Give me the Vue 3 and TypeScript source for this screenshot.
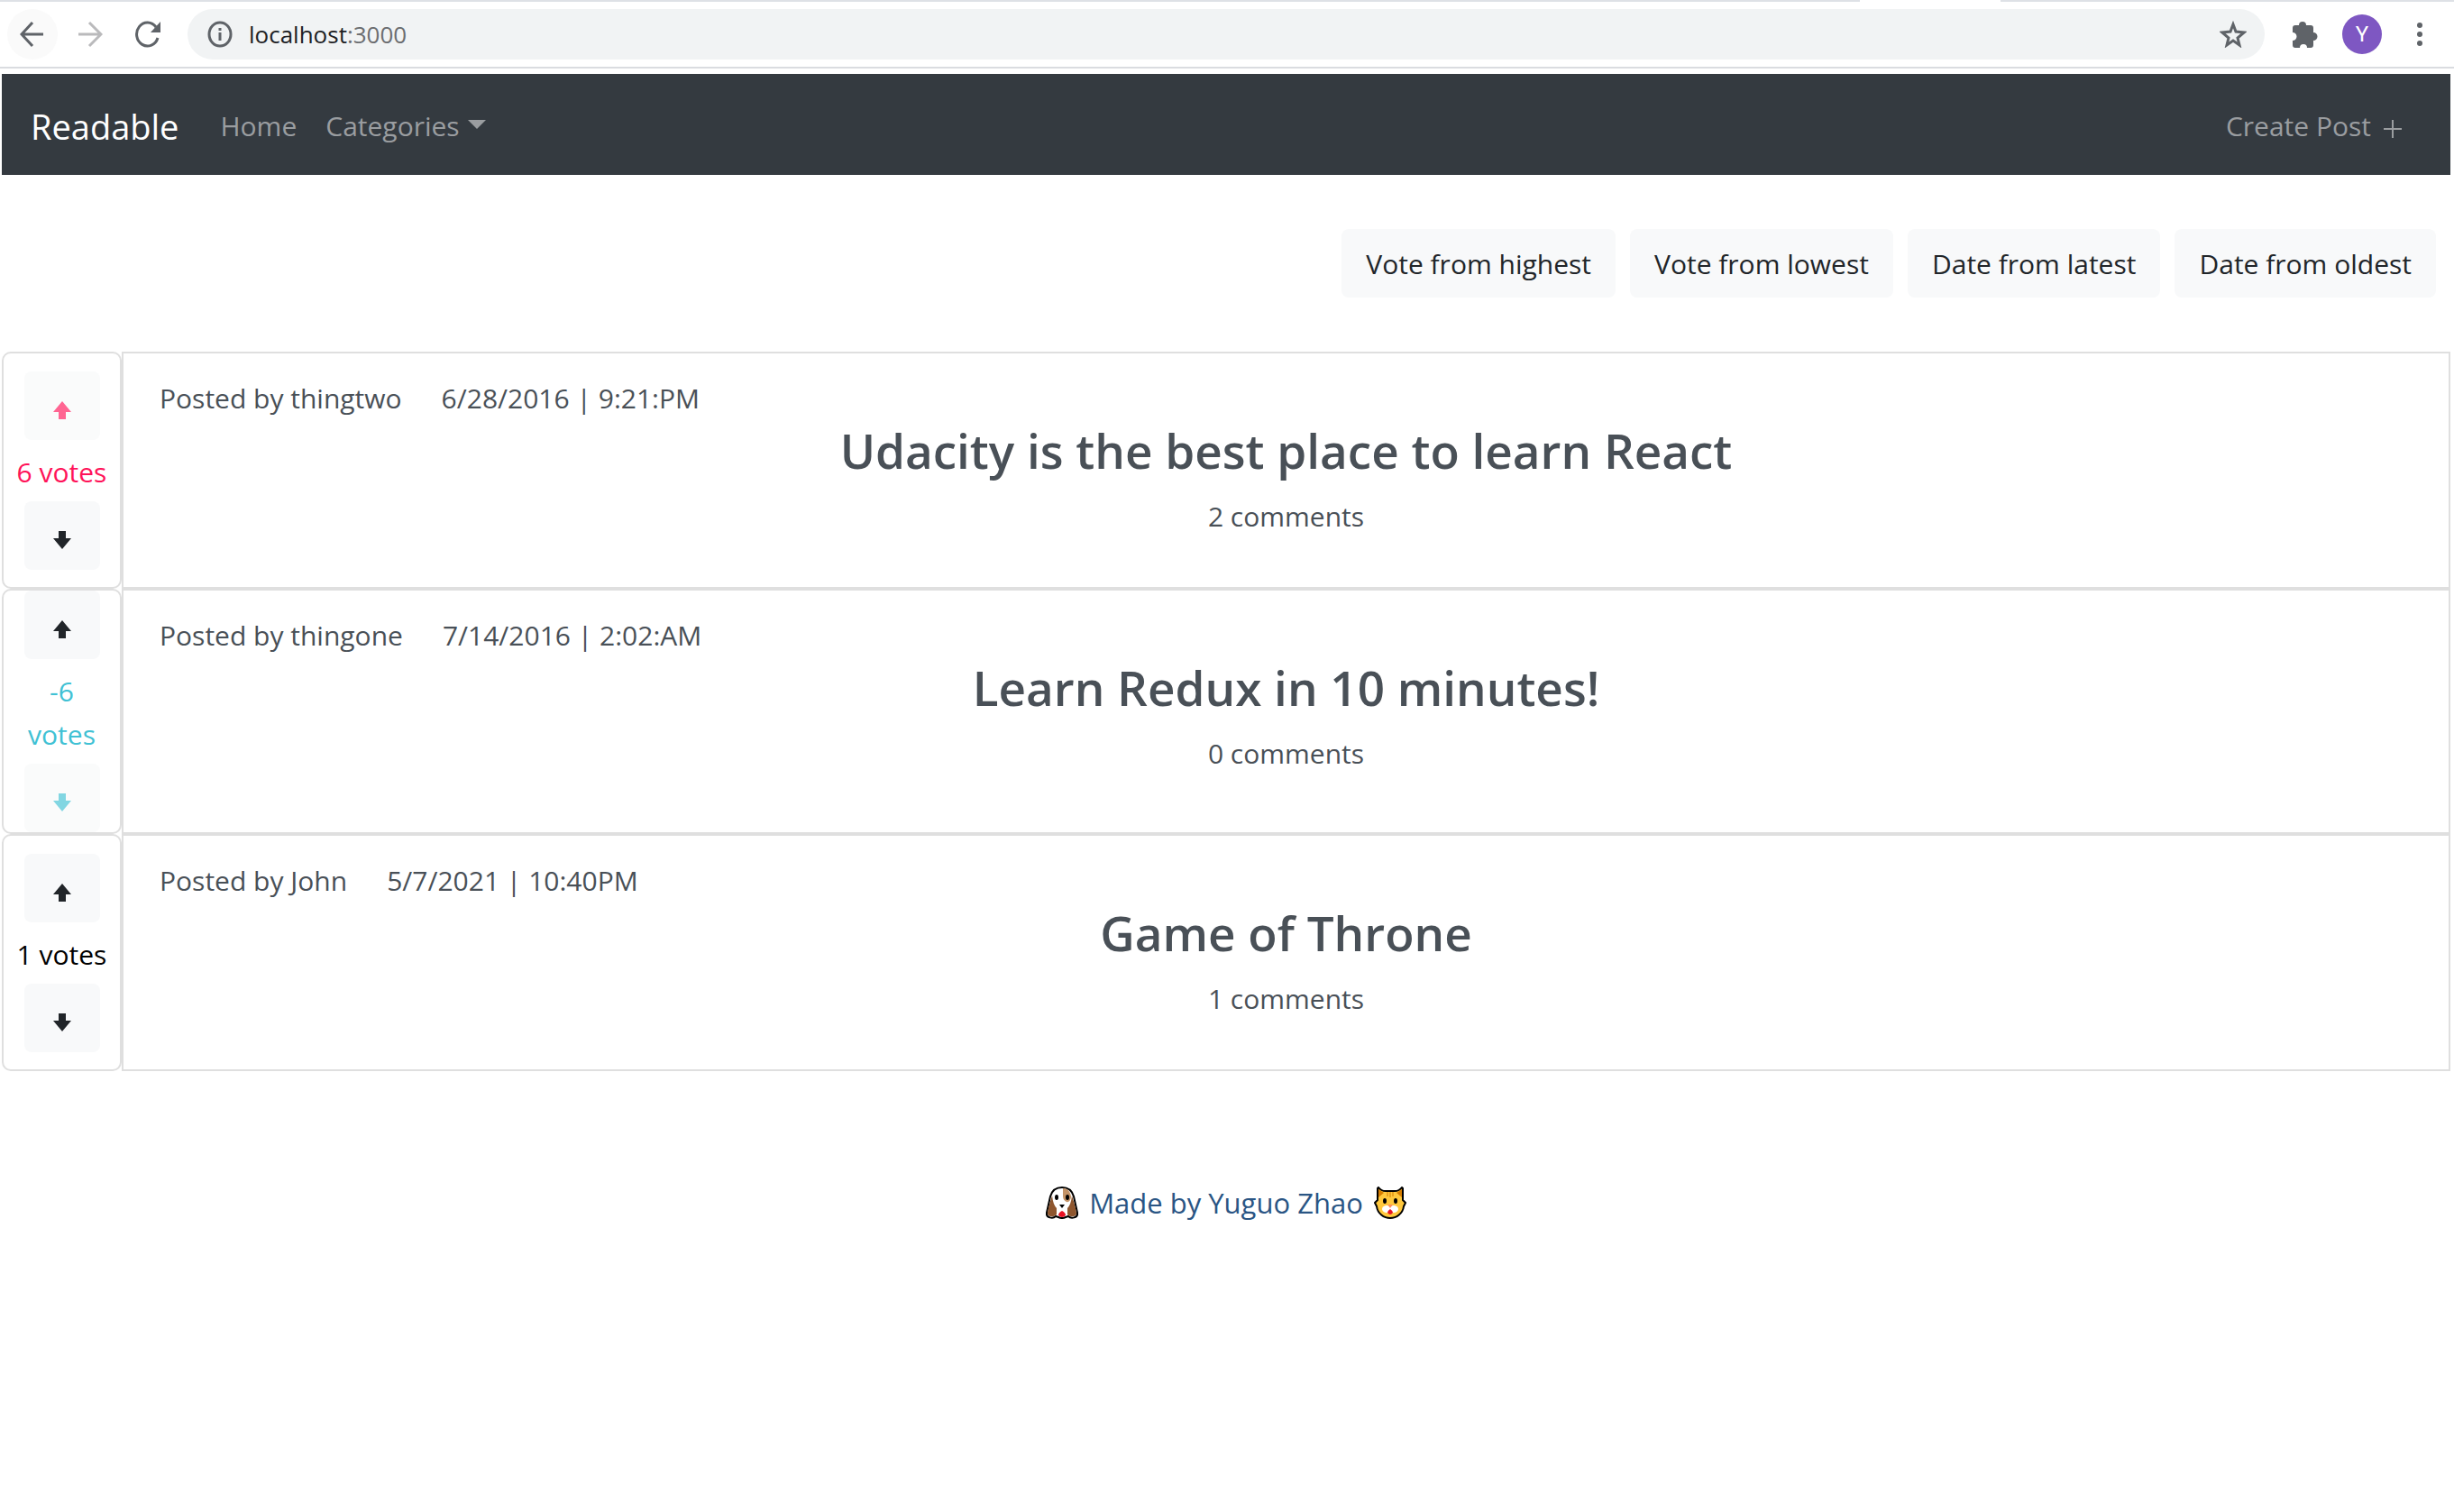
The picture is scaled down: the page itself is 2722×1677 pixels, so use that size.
<script setup lang="ts">
import { ref } from 'vue'

interface Post {
  id: number
  author: string
  date: string
  title: string
  comments: number
  votes: number
  voted: 'up' | 'down' | null
}

const address = ref('localhost:3000')
const sortOptions: string[] = [
  'Vote from highest',
  'Vote from lowest',
  'Date from latest',
  'Date from oldest',
]
const posts = ref<Post[]>([
  { id: 1, author: 'thingtwo', date: '6/28/2016 | 9:21:PM', title: 'Udacity is the best place to learn React', comments: 2, votes: 6, voted: 'up' },
  { id: 2, author: 'thingone', date: '7/14/2016 | 2:02:AM', title: 'Learn Redux in 10 minutes!', comments: 0, votes: -6, voted: 'down' },
  { id: 3, author: 'John', date: '5/7/2021 | 10:40PM', title: 'Game of Throne', comments: 1, votes: 1, voted: null },
])
</script>

<template>
  <div class="tabs"><div class="active-tab"></div></div>
  <header class="browser">
    <button class="tool back" aria-label="Back">
      <svg width="28" height="30" viewBox="0 0 28 30"><path d="M26 15H3M14 2 2 15l12 13" /></svg>
    </button>
    <button class="tool forward" aria-label="Forward">
      <svg width="28" height="30" viewBox="0 0 28 30"><path d="M1 15h24M13 2l13 13-13 13" /></svg>
    </button>
    <button class="tool" aria-label="Reload">
      <svg width="28" height="30" viewBox="0 0 28 30">
        <path d="M23 7A12 13 0 1 0 25 19" />
        <path class="solid" d="M28 1v12H17z" />
      </svg>
    </button>
    <div class="address">
      <svg width="28" height="30" viewBox="0 0 28 30">
        <ellipse cx="14" cy="15" rx="12" ry="13" />
        <path d="M14 13v9M14 8v3" />
      </svg>
      <span class="url">{{ address.split(':')[0] }}<span class="port">:{{ address.split(':')[1] }}</span></span>
      <button class="star" aria-label="Bookmark this page">
        <svg width="30" height="30" viewBox="0 0 30 30">
          <path d="m15 4 3 8 9 1-7 6 2 8-7-5-7 5 2-8-7-6 9-1z" />
        </svg>
      </button>
    </div>
    <button class="icon" aria-label="Extensions">
      <svg width="30" height="30" viewBox="0 0 30 30">
        <path class="solid" d="M8 5a4 4 0 0 1 8 0h5a3 3 0 0 1 3 3v5a4 4 0 0 1 0 9v5a3 3 0 0 1-3 3h-4a4 4 0 0 0-8 0H4a3 3 0 0 1-3-3v-5a4 4 0 0 0 0-9V8a3 3 0 0 1 3-3z" />
      </svg>
    </button>
    <button class="avatar" aria-label="Profile">Y</button>
    <button class="icon menu" aria-label="Menu">
      <svg width="8" height="28" viewBox="0 0 8 28">
        <g class="solid"><circle cx="4" cy="4" r="3" /><circle cx="4" cy="14" r="3" /><circle cx="4" cy="24" r="3" /></g>
      </svg>
    </button>
  </header>

  <div class="page">
    <nav class="navbar">
      <a class="brand" href="#">Readable</a>
      <a class="link" href="#">Home</a>
      <a class="link" href="#">Categories<i class="caret"></i></a>
      <a class="link create" href="#">Create Post
        <svg width="20" height="20" viewBox="0 0 20 20"><path d="M10 0v20M0 10h20" /></svg>
      </a>
    </nav>

    <div class="sorts">
      <button v-for="option in sortOptions" :key="option" class="btn">{{ option }}</button>
    </div>

    <main>
      <article v-for="post in posts" :key="post.id" class="post">
        <div class="votes" :class="post.voted">
          <button class="vote up" :disabled="post.voted === 'up'" aria-label="Vote up">
            <svg width="20" height="20" viewBox="0 0 20 20"><path d="m10 0 10 12h-6v8H6v-8H0z" /></svg>
          </button>
          <p class="count">{{ post.votes }} votes</p>
          <button class="vote down" :disabled="post.voted === 'down'" aria-label="Vote down">
            <svg width="20" height="20" viewBox="0 0 20 20"><path d="m10 20 10-12h-6V0H6v8H0z" /></svg>
          </button>
        </div>
        <div class="body">
          <p class="meta"><span>Posted by {{ post.author }}</span><span>{{ post.date }}</span></p>
          <h3>{{ post.title }}</h3>
          <p class="comments">{{ post.comments }} comments</p>
        </div>
      </article>
    </main>

    <footer>
      <svg width="36" height="36" viewBox="0 0 36 36" aria-label="Dog">
        <path d="M18 1C11 1 7 4 5 11L1 29c-1 6 7 7 10 4l3 1q4 2 8 0l3-1c3 3 11 2 10-4l-4-18C29 4 25 1 18 1z" fill="#fff" stroke="#000" stroke-width="2" />
        <path d="M7 10C5 17 2 26 2 30c0 4 8 4 10 1V24q-4-4-5-14zM29 10c2 7 5 16 5 20 0 4-8 4-10 1V24q4-4 5-14z" fill="#8e562e" />
        <path d="M19 2c6 0 8 4 9 9 0 4-3 7-5 6-4-2-4-5-4-8z" fill="#c39367" />
        <ellipse cx="12" cy="12" rx="2" ry="3" /><ellipse cx="24" cy="12" rx="2" ry="3" />
        <path d="M15 20h6l-3 4z" />
        <path d="M18 27q4 2 4 5-4 4-8 0 0-3 4-5z" fill="#e81224" />
      </svg>
      <a href="#">Made by Yuguo Zhao</a>
      <svg width="36" height="36" viewBox="0 0 36 36" aria-label="Cat">
        <path d="M5 1q3 4 8 4h10q5 0 8-4l1 1v13l3 3-2 4C32 30 25 35 18 35S4 30 3 22l-2-4 3-3V2z" fill="#ffc83d" stroke="#000" stroke-width="2" stroke-linejoin="round" />
        <path d="m5 3 6 4-6 5zM31 3l-6 4 6 5z" fill="#d67d00" />
        <path d="M15 6v5M18 6v6M21 6v5" stroke="#d67d00" stroke-width="1" />
        <ellipse cx="12" cy="16" rx="2" ry="3" /><ellipse cx="24" cy="16" rx="2" ry="3" />
        <ellipse cx="14" cy="25" rx="5" ry="4" fill="#fff" /><ellipse cx="22" cy="25" rx="5" ry="4" fill="#fff" />
        <path d="M15 20h6l-3 4z" fill="#ff8f5c" />
        <path d="M18 25q3 2 3 4-3 4-6 0 0-2 3-4z" fill="#e81224" />
      </svg>
    </footer>
  </div>
</template>

<style>
body {
  margin: 0;
  background: #fff;
}
</style>

<style scoped>
* {
  box-sizing: border-box;
}
.browser,
.page {
  font-family: 'Open Sans', 'Noto Sans', sans-serif;
  font-size: 30px;
  line-height: 48px;
}
button {
  border: 0;
  padding: 0;
  background: none;
  font: inherit;
  color: inherit;
}
a {
  text-decoration: none;
}
p,
h3 {
  margin: 0;
}
svg {
  display: block;
  flex: none;
}

.tabs {
  display: flex;
  justify-content: flex-end;
  height: 2px;
  padding-right: 503px;
  background: #dee1e6;
}
.active-tab {
  width: 156px;
  background: #fff;
}
.browser {
  display: flex;
  align-items: center;
  height: 74px;
  padding: 0 34px 0 8px;
  border-bottom: 2px solid #dadce0;
}
.browser svg {
  fill: none;
  stroke: #5f6368;
  stroke-width: 3;
}
.browser .solid {
  fill: #5f6368;
  stroke: none;
}
.tool {
  display: grid;
  place-items: center;
  width: 56px;
  height: 56px;
  margin-right: 8px;
  border-radius: 50%;
}
.back {
  background: #fafafa;
}
.forward svg {
  stroke: #bababc;
}
.address {
  flex: 1;
  display: flex;
  align-items: center;
  height: 56px;
  margin-left: 8px;
  padding: 0 20px 0 22px;
  border-radius: 28px;
  background: #f1f3f4;
}
.url {
  flex: 1;
  margin-left: 18px;
  font-size: 26px;
  color: #202124;
}
.port {
  color: #6b6d70;
}
.icon {
  margin-left: 30px;
}
.avatar {
  width: 44px;
  height: 44px;
  margin: 0 30px 0 26px;
  border-radius: 50%;
  background: #7e57c2;
  color: #fff;
  font-family: Roboto, sans-serif;
  font-size: 24px;
  line-height: 44px;
}
.menu {
  margin-left: 8px;
}

.page {
  padding: 6px 4px 0 2px;
  color: #212529;
}
.navbar {
  display: flex;
  align-items: center;
  height: 112px;
  padding: 3px 32px 0;
  background: #343a40;
}
.brand {
  margin-right: 30px;
  font-size: 38px;
  color: #fff;
}
.link {
  display: flex;
  align-items: center;
  padding: 0 16px;
  color: #9a9da0;
}
.caret {
  margin: -4px 0 0 9px;
  border: 10px solid transparent;
  border-top-color: currentColor;
  border-bottom: 0;
}
.create {
  gap: 14px;
  margin-left: auto;
  padding-right: 22px;
}
.create svg {
  margin-top: 6px;
  stroke: currentColor;
  stroke-width: 2;
}

.sorts {
  display: flex;
  justify-content: flex-end;
  gap: 16px;
  padding: 60px 16px;
}
.btn {
  height: 76px;
  padding: 2px 27px 0;
  border-radius: 8px;
  background: #f8f9fa;
}

.post {
  display: grid;
  grid-template-columns: 133px 1fr;
}
.votes {
  display: flex;
  flex-direction: column;
  align-items: center;
  justify-content: center;
  padding: 0 10px;
  border: 2px solid #dfdfdf;
  border-radius: 10px;
  text-align: center;
}
.vote {
  width: 84px;
  height: 76px;
  padding: 33px 32px 23px;
  border-radius: 8px;
  background: #f8f9fa;
  fill: #212529;
}
.vote:disabled {
  opacity: 0.65;
}
.up .vote:disabled {
  fill: #ff1359;
}
.down .vote:disabled {
  fill: #40c1d4;
}
.count {
  margin: 12px 0 8px;
  color: #000;
}
.up .count {
  color: #ff1359;
}
.down .count {
  color: #40c1d4;
}
.body {
  padding: 26px 40px 54px;
  border: 2px solid #dfdfdf;
  color: #495057;
}
.meta {
  display: flex;
  gap: 44px;
}
h3 {
  margin-bottom: 15px;
  font-size: 53px;
  font-weight: 600;
  line-height: 68px;
  text-align: center;
}
.comments {
  text-align: center;
}

footer {
  display: flex;
  align-items: center;
  justify-content: center;
  gap: 12px;
  margin-top: 122px;
  font-size: 31px;
}
footer a {
  color: #2a5584;
}
</style>
